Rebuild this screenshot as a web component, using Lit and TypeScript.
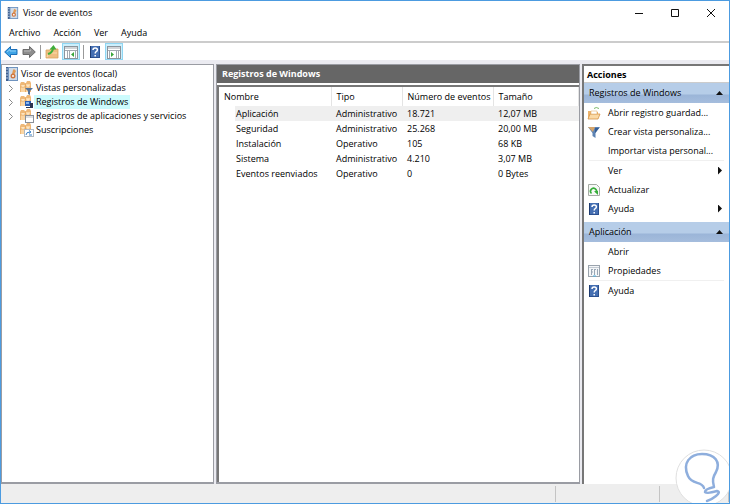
import { LitElement, html, css, svg, nothing } from "lit";
import { customElement, property } from "lit/decorators.js";

const folder = svg`
  <path d="M0 3l1-2h3l1 1h1l1-2h3l1 2v9H0z" fill="#eeb878"/>
  <path d="M1 4h4v7H1zM6 3h4v8H6z" fill="#fbd6a3"/>
  <path d="M0 6h11M5.500 3v8" stroke="#e2a661" stroke-width=".8"/>
  <path d="M2 5h2M7 5h2" stroke="#fff3de"/>`;

const book = svg`
  <rect x="1" y="0" width="12" height="14" fill="#6f93bf"/>
  <rect x="1" y="0" width="2" height="14" fill="#3f5f8f"/>
  <path d="M1 2h2M1 5h2M1 8h2M1 11h2" stroke="#b9cbe2"/>
  <rect x="4" y="1" width="8" height="12" fill="#cfdbe9"/>
  <path d="M8 3l1-1 2 2-2 4-2-1z" fill="#e29a55"/>
  <circle cx="8" cy="9" r="2.500" fill="#cf7742"/>
  <circle cx="8" cy="9" r="1" fill="#fff"/>`;

const icons: Record<string, unknown> = {
  book,
  back: svg`<path d="M.7 7L6.500 1.500v3H13v5H6.500v3z" fill="#3fa4e6" stroke="#1b6fb8" stroke-width="1"/><path d="M3 7l3-2.500V6h6" fill="none" stroke="#8fd0f7"/>`,
  forward: svg`<path d="M13.300 7L7.500 1.500v3H1v5h6.500v3z" fill="#8d8d8d" stroke="#6b6b6b" stroke-width="1"/><path d="M2 6h6.500V4.500" fill="none" stroke="#b9b9b9"/>`,
  up: svg`<path d="M1 5h4l1-1h7v9H1z" fill="#efbd80" stroke="#d9a561" stroke-width=".8"/><path d="M2 12l2-4h8" fill="none" stroke="#fbdcae"/><path d="M3 9q4-1 5-5" fill="none" stroke="#3fae3a" stroke-width="2"/><path d="M4.500 4.500L8.500 0l3 4.500z" fill="#3fae3a"/>`,
  paneLeft: svg`<rect x=".5" y="1.500" width="13" height="12" fill="#fff" stroke="#8c949c"/><path d="M1 3h12M1 5.500h12" stroke="#a3a9b0"/><path d="M3.500 6v7M5.500 6v7M11.500 6v7" stroke="#a3a9b0"/><path d="M10 7v5L7 9.500z" fill="#3aa63a"/>`,
  paneRight: svg`<rect x=".5" y="1.500" width="13" height="12" fill="#fff" stroke="#8c949c"/><path d="M1 3h12M1 5.500h12" stroke="#a3a9b0"/><path d="M2.500 6v7M9.500 6v7M11.500 6v7" stroke="#a3a9b0"/><path d="M4 7v5l3-2.500z" fill="#3aa63a"/>`,
  help: svg`<rect x="2" y="1" width="10" height="12" fill="#456fb2"/><path d="M2.500 1v12" stroke="#1d3a70"/><path d="M3 12.500h9M11.500 1v12" stroke="#2b5090"/><path d="M5 5q0-2 2.200-2t2.200 1.800q0 1.200-1.200 1.800-1 .5-1 1.900M7.200 10v1.500" fill="none" stroke="#fff" stroke-width="1.500"/>`,
  views: svg`${folder}<path d="M5 7h8l-3 3v4l-2-1v-3z" fill="#56749c"/>`,
  windows: svg`${folder}<rect x="5" y="6" width="6" height="5" fill="#2b5fb4"/><path d="M6 7h3v2H6z" fill="#8ab4e8"/><path d="M10 8h3v5H6v-1h4z" fill="#2a3550"/>`,
  apps: svg`${folder}<rect x="5.500" y="6.500" width="8" height="7" fill="#fff" stroke="#8a9098"/><path d="M6 8h7" stroke="#b9bfc6"/>`,
  subs: svg`${folder}<rect x="4.500" y="6.500" width="9" height="7" fill="#fff" stroke="#b3bac2"/><path d="M6 12q0-3 4-3M9 7.500L11 9l-2 1.500M9 12h3" fill="none" stroke="#3b82c8"/>`,
  open: svg`<path d="M1 5h4l1 1h5v7H1z" fill="#edb36b"/><path d="M1 13l2-5h10l-2 5z" fill="#fad9a6" stroke="#d59346" stroke-width=".8"/><path d="M4 5h6v3H4z" fill="#fff" stroke="#e0b277" stroke-width=".6"/><path d="M7 2.500q2-2 5 0" fill="none" stroke="#7cba6b"/>`,
  funnel: svg`<path d="M1 2h12L8.500 8v5l-3-2V8z" fill="#5d83b3"/><path d="M1 2h7L6 7z" fill="#d5a56c"/><path d="M8 3h4L8 8z" fill="#355e96"/>`,
  refresh: svg`<path d="M1.500 1.500h8l3 3v8h-11z" fill="#f7f9f7" stroke="#a4aaa4"/><path d="M4.500 10.500A3 3 0 1 1 9 10" fill="none" stroke="#36ae3a" stroke-width="1.600"/><path d="M7 8h4v4z" fill="#36ae3a"/>`,
  props: svg`<rect x="1.500" y="1.500" width="11" height="11" fill="#f4f6f8" stroke="#9aa3ad"/><path d="M2 3.500h10" stroke="#c3cad2"/><path d="M4.500 5v6M4 5.500h2M4 8h2M7.500 5v6M10.500 5v6M7 5.500h2" stroke="#99a7b5"/><path d="M6 12h3" stroke="#4fb3e4"/>`,
};

const icon = (name?: string) =>
  name
    ? html`<svg class="icon" viewBox="0 0 14 14" aria-hidden="true">${icons[name]}</svg>`
    : html`<span class="icon"></span>`;

interface Action { label: string; icon?: string; sub?: boolean; rule?: boolean }

const base = css`
  * { box-sizing: border-box; }
  button {
    font: inherit; color: inherit; background: none; border: 0;
    padding: 0; margin: 0; text-align: left; white-space: nowrap;
  }
  ul { list-style: none; margin: 0; padding: 0; }
  .icon { display: block; width: 14px; height: 14px; flex: none; }
`;

@customElement("action-group")
export class ActionGroup extends LitElement {
  @property() heading = "";
  @property({ attribute: false }) actions: Action[] = [];

  static styles = [base, css`
    :host { display: block; padding-bottom: 4px; }
    .band {
      display: flex; align-items: center; justify-content: space-between;
      width: 100%; height: 20px; padding: 0 6px 0 5px;
      background: linear-gradient(#b6cde8 55%, #9bb5d8 60%, #a5bddd);
    }
    .up { width: 7px; height: 4px; background: #111; clip-path: polygon(50% 0, 100% 100%, 0 100%); }
    .item { display: flex; align-items: center; width: 100%; height: 19px; padding: 0 7px 0 3px; }
    .label { flex: 1; margin-left: 7px; }
    .sub { width: 4px; height: 8px; background: #111; clip-path: polygon(0 0, 100% 50%, 0 100%); }
    .rule { border-top: 1px solid #f0f0f0; margin: 0 5px; }
  `];

  render() {
    return html`
      <button class="band">${this.heading}<span class="up"></span></button>
      <ul>
        ${this.actions.map((a) => html`
          <li>
            ${a.rule ? html`<div class="rule"></div>` : nothing}
            <button class="item">
              ${icon(a.icon)}<span class="label">${a.label}</span>
              ${a.sub ? html`<span class="sub"></span>` : nothing}
            </button>
          </li>`)}
      </ul>`;
  }
}

@customElement("app-root")
export class AppRoot extends LitElement {
  private tree = [
    { label: "Vistas personalizadas", icon: "views", expand: true },
    { label: "Registros de Windows", icon: "windows", expand: true, selected: true },
    { label: "Registros de aplicaciones y servicios", icon: "apps", expand: true },
    { label: "Suscripciones", icon: "subs" },
  ];

  private logs = [
    ["Aplicación", "Administrativo", "18.721", "12,07 MB"],
    ["Seguridad", "Administrativo", "25.268", "20,00 MB"],
    ["Instalación", "Operativo", "105", "68 KB"],
    ["Sistema", "Administrativo", "4.210", "3,07 MB"],
    ["Eventos reenviados", "Operativo", "0", "0 Bytes"],
  ];

  private logActions: Action[] = [
    { label: "Abrir registro guardad...", icon: "open" },
    { label: "Crear vista personaliza...", icon: "funnel" },
    { label: "Importar vista personal..." },
    { label: "Ver", sub: true, rule: true },
    { label: "Actualizar", icon: "refresh" },
    { label: "Ayuda", icon: "help", sub: true },
  ];

  private appActions: Action[] = [
    { label: "Abrir" },
    { label: "Propiedades", icon: "props" },
    { label: "Ayuda", icon: "help", rule: true },
  ];

  static styles = [base, css`
    :host {
      display: flex; flex-direction: column; position: relative; overflow: hidden;
      box-sizing: border-box; min-height: 100vh; border: 1px solid #4c9be0;
      background: #fff; color: #000;
      font: 9px/14px "Open Sans", "Noto Sans", sans-serif;
    }
    .title { display: flex; align-items: center; height: 23px; padding-left: 5px; }
    .title .icon { width: 12px; height: 12px; margin-left: 1px; }
    .title h1 { flex: 1; margin: 0 0 0 4px; font: inherit; }
    .win { width: 36px; height: 22px; display: grid; place-items: center; }
    .win svg { width: 10px; height: 10px; fill: none; stroke: #111; }
    .menu { display: flex; gap: 13px; height: 19px; padding: 0 8px; border-bottom: 2px solid #ccc; }
    .tools { display: flex; align-items: center; height: 17px; padding-left: 2px; gap: 2px; }
    .tool { display: grid; place-items: center; width: 16px; height: 16px; }
    .on { background: #cceffc; border: 1px solid #8fd6f3; width: 18px; height: 17px; }
    .split { width: 1px; height: 14px; background: #999; margin: 0 1px; }
    .body {
      flex: 1; display: grid; grid-template-columns: 213px minmax(0, 1fr) 147px; gap: 2px;
      padding-top: 4px; background: #ebebf1;
    }
    .nav { background: #fff; border: 1px solid #9a9ca3; border-width: 1px 1px 2px; padding: 2px 0 0 3px; }
    .node { display: flex; align-items: center; height: 14px; }
    .text { padding: 0 2px; }
    .selected .text { background: #ccfbfd; }
    .chev { width: 15px; height: 9px; flex: none; fill: none; stroke: #8a8a8a; }
    .centre { display: flex; flex-direction: column; background: #fff; border: 1px solid #9a9ca3; border-width: 1px 1px 2px; }
    h2 { margin: 0; font-size: 9px; line-height: 18px; color: #fff; background: #666; padding-left: 5px; }
    .list { flex: 1; margin-top: 2px; border: 1px solid #777; border-width: 2px 0 0 2px; }
    table { width: 100%; border-collapse: collapse; table-layout: fixed; }
    .c1 { width: 112px; } .c2 { width: 71px; } .c3 { width: 91px; }
    th, td { padding: 0 0 0 5px; text-align: left; font-weight: 400; white-space: nowrap; }
    th { height: 19px; border-right: 1px solid #e4e4e4; }
    td { height: 15px; line-height: 15px; }
    td:first-child { padding-left: 17px; }
    .current td { background: #efefef; }
    .current td:first-child { background: linear-gradient(90deg, #fff 16px, #efefef 16px); }
    .side { background: #fff; border: 1px solid #777; border-width: 2px 0 0 2px; }
    .side h3 { margin: 0; padding-left: 3px; height: 17px; line-height: 17px; font-size: 9px; border-bottom: 1px solid #ccc; }
    .status { display: grid; grid-template-columns: 1fr 104px 69px; height: 19px; padding: 2px 0 1px 1px; background: #eee; }
    .cell { border-right: 1px solid #c4c4c4; }
    .mark { position: absolute; right: -4px; bottom: -4px; width: 58px; height: 58px; }
  `];

  render() {
    return html`
      <header class="title">
        ${icon("book")}
        <h1>Visor de eventos</h1>
        <button class="win" aria-label="Minimizar"><svg viewBox="0 0 10 10"><path d="M1 5.500h8"/></svg></button>
        <button class="win" aria-label="Maximizar"><svg viewBox="0 0 10 10"><path d="M1.500 1.500h7v7h-7z"/></svg></button>
        <button class="win" aria-label="Cerrar"><svg viewBox="0 0 10 10"><path d="M1 1l8 8M9 1l-8 8"/></svg></button>
      </header>
      <nav class="menu">
        ${["Archivo", "Acción", "Ver", "Ayuda"].map((m) => html`<button>${m}</button>`)}
      </nav>
      <div class="tools">
        <button class="tool" aria-label="Atrás">${icon("back")}</button>
        <button class="tool" aria-label="Adelante">${icon("forward")}</button>
        <span class="split"></span>
        <button class="tool" aria-label="Subir">${icon("up")}</button>
        <button class="tool on" aria-label="Árbol">${icon("paneLeft")}</button>
        <span class="split"></span>
        <button class="tool" aria-label="Ayuda">${icon("help")}</button>
        <button class="tool on" aria-label="Panel de acciones">${icon("paneRight")}</button>
      </div>
      <main class="body">
        <nav class="nav">
          <button class="node">${icon("book")}<span class="text">Visor de eventos (local)</span></button>
          <ul>
            ${this.tree.map((n) => html`
              <li>
                <button class="node ${n.selected ? "selected" : ""}">
                  <svg class="chev" viewBox="0 0 15 9">${n.expand ? svg`<path d="M4 1l3.500 3.500L4 8"/>` : nothing}</svg>
                  ${icon(n.icon)}<span class="text">${n.label}</span>
                </button>
              </li>`)}
          </ul>
        </nav>
        <section class="centre">
          <h2>Registros de Windows</h2>
          <div class="list">
            <table>
              <colgroup><col class="c1"><col class="c2"><col class="c3"><col></colgroup>
              <thead><tr><th>Nombre</th><th>Tipo</th><th>Número de eventos</th><th>Tamaño</th></tr></thead>
              <tbody>
                ${this.logs.map((r, i) => html`<tr class=${i === 0 ? "current" : ""}>${r.map((c) => html`<td>${c}</td>`)}</tr>`)}
              </tbody>
            </table>
          </div>
        </section>
        <aside class="side">
          <h3>Acciones</h3>
          <action-group heading="Registros de Windows" .actions=${this.logActions}></action-group>
          <action-group heading="Aplicación" .actions=${this.appActions}></action-group>
        </aside>
      </main>
      <footer class="status"><span class="cell"></span><span class="cell"></span><span class="cell"></span></footer>
      <svg class="mark" viewBox="0 0 58 58" aria-hidden="true">
        <circle cx="29" cy="29" r="28" fill="#fff" stroke="#e0e0e0"/>
        <path d="M29 39C27 32 17 36 13 27C7 14 15 5 27 5C40 5 46 13 41 23C38 28 37 31 39 38M39 38Q30 40 30 43Q32 45 42 42Q46 43 41 47Q36 51 32 52" fill="none" stroke="#8eaedd" stroke-width="2.500" stroke-linecap="round" stroke-linejoin="round"/>
      </svg>`;
  }
}
